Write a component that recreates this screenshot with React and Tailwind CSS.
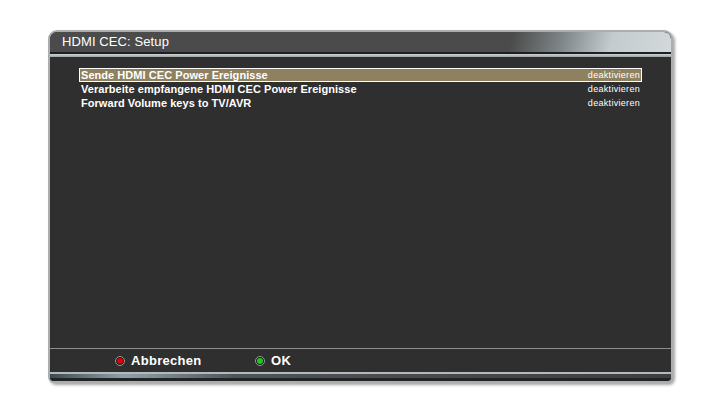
const rows = [
  { label: "Sende HDMI CEC Power Ereignisse", value: "deaktivieren" },
  { label: "Verarbeite empfangene HDMI CEC Power Ereignisse", value: "deaktivieren" },
  { label: "Forward Volume keys to TV/AVR", value: "deaktivieren" },
];

function Dot({ color }) {
  return (
    <span className="w-[10px] h-[10px] rounded-full bg-[#1a1a1a] border border-[#9a9a9a] flex items-center justify-center">
      <span className={`w-[6px] h-[6px] rounded-full ${color}`} />
    </span>
  );
}

export default function App() {
  return (
    <div
      className="w-[720px] h-[405px] bg-white pt-[30px] pl-[48px]"
      style={{ fontFamily: '"Liberation Sans", Arial, sans-serif' }}
    >
      <div className="w-[625px] h-[353px] flex flex-col rounded-t-[9px] rounded-b-[6px] border-2 border-[#a9aeb1] bg-[#2f2f2f] shadow-[2px_2px_3px_rgba(0,0,0,0.35)] overflow-hidden">
        <div className="h-[20px] shrink-0 flex items-center pl-[12px] bg-[linear-gradient(105deg,#4b4b4b_0%,#4b4b4b_74%,#7d8588_82%,#c3cbce_90%,#d3d9db_100%)] rounded-t-[7px]">
          <span className="text-white text-[13px] tracking-[0.1px]">HDMI CEC: Setup</span>
        </div>
        <div className="h-[2px] shrink-0 bg-[#1f1f1f]" />
        <div className="h-[3px] shrink-0 bg-[linear-gradient(to_bottom,#cfd3d5,#9ea3a6)]" />

        <div className="flex-1 flex flex-col pt-[11px] pl-[29px] pr-[29px]">
          {rows.map((row, i) => (
            <div
              key={i}
              className={`h-[14px] flex items-center justify-between pl-[1px] pr-[1px] ${
                i === 0 ? "bg-[#8f8160] border border-white" : "border border-transparent"
              }`}
            >
              <span className="text-white text-[11px] font-bold tracking-[0.05px] leading-none">
                {row.label}
              </span>
              <span className="text-white text-[9px] tracking-[0.3px] leading-none">
                {row.value}
              </span>
            </div>
          ))}
        </div>

        <div className="h-[1px] shrink-0 bg-[#8d8d8d]" />
        <div className="h-[23px] shrink-0 flex items-center pl-[65px] gap-[6px]">
          <Dot color="bg-[#e00000]" />
          <span className="text-white text-[13px] font-bold tracking-[0.3px] w-[118px]">Abbrechen</span>
          <Dot color="bg-[#1ec81e]" />
          <span className="text-white text-[13px] font-bold tracking-[0.3px]">OK</span>
        </div>
        <div className="h-[2px] shrink-0 bg-[#b5b9bb]" />
        <div className="h-[4px] shrink-0 bg-[linear-gradient(90deg,#3c4a52_0%,#8ea2ab_12%,#4c5458_30%,#3e3e3e_100%)]" />
        <div className="flex-1 max-h-[3px] bg-[#232323]" />
      </div>
    </div>
  );
}
